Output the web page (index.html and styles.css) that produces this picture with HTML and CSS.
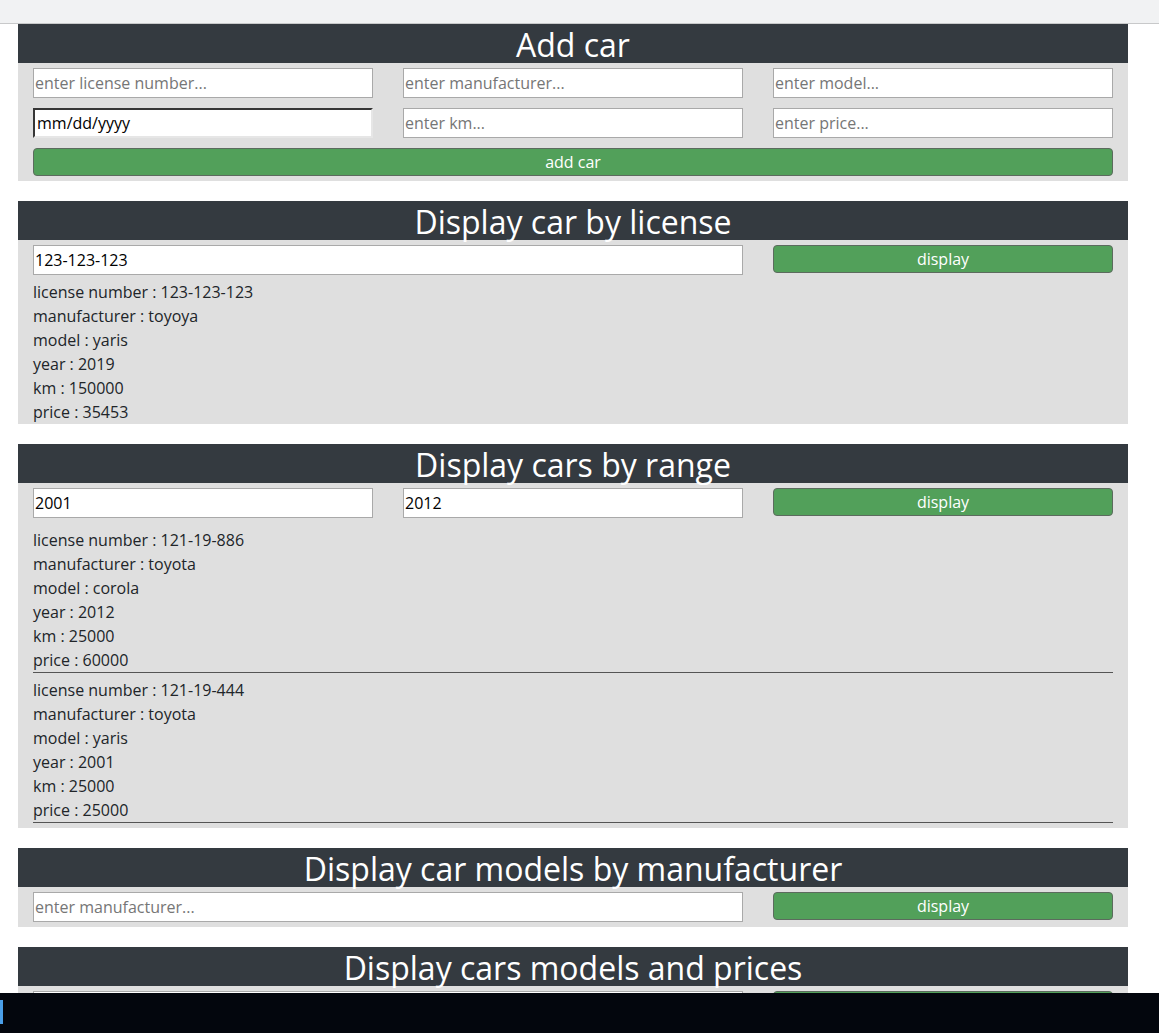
FILE: index.html
```html
<!DOCTYPE html>
<html lang="en">
<head>
    <meta charset="UTF-8">
    <meta name="viewport" content="width=device-width, initial-scale=1.0">
    <title>Car Dealer</title>
    <link rel="stylesheet" href="styles.css">
</head>
<body>
    <div class="topbar"></div>

    <main class="page">
        <!-- Add car -->
        <section class="panel">
            <h2 class="panel-title">Add car</h2>
            <div class="panel-body stack">
                <div class="row">
                    <input type="text" class="field" placeholder="enter license number...">
                    <input type="text" class="field" placeholder="enter manufacturer...">
                    <input type="text" class="field" placeholder="enter model...">
                </div>
                <div class="row">
                    <input type="text" class="field field-date" value="mm/dd/yyyy">
                    <input type="text" class="field" placeholder="enter km...">
                    <input type="text" class="field" placeholder="enter price...">
                </div>
                <button class="btn">add car</button>
            </div>
        </section>

        <!-- Display by license -->
        <section class="panel">
            <h2 class="panel-title">Display car by license</h2>
            <div class="panel-body">
                <div class="row">
                    <input type="text" class="field span2" value="123-123-123">
                    <button class="btn">display</button>
                </div>
                <div class="results single">
                    <div class="record">
                        <div>license number : 123-123-123</div>
                        <div>manufacturer : toyoya</div>
                        <div>model : yaris</div>
                        <div>year : 2019</div>
                        <div>km : 150000</div>
                        <div>price : 35453</div>
                    </div>
                </div>
            </div>
        </section>

        <!-- Display by range -->
        <section class="panel">
            <h2 class="panel-title">Display cars by range</h2>
            <div class="panel-body">
                <div class="row">
                    <input type="text" class="field" value="2001">
                    <input type="text" class="field" value="2012">
                    <button class="btn">display</button>
                </div>
                <div class="results list">
                    <div class="record">
                        <div>license number : 121-19-886</div>
                        <div>manufacturer : toyota</div>
                        <div>model : corola</div>
                        <div>year : 2012</div>
                        <div>km : 25000</div>
                        <div>price : 60000</div>
                    </div>
                    <div class="record">
                        <div>license number : 121-19-444</div>
                        <div>manufacturer : toyota</div>
                        <div>model : yaris</div>
                        <div>year : 2001</div>
                        <div>km : 25000</div>
                        <div>price : 25000</div>
                    </div>
                </div>
            </div>
        </section>

        <!-- Models by manufacturer -->
        <section class="panel">
            <h2 class="panel-title">Display car models by manufacturer</h2>
            <div class="panel-body">
                <div class="row">
                    <input type="text" class="field span2" placeholder="enter manufacturer...">
                    <button class="btn">display</button>
                </div>
            </div>
        </section>

        <!-- Models and prices -->
        <section class="panel">
            <h2 class="panel-title">Display cars models and prices</h2>
            <div class="panel-body">
                <div class="row">
                    <input type="text" class="field span2" placeholder="enter manufacturer...">
                    <button class="btn">display</button>
                </div>
            </div>
        </section>
    </main>

    <div class="taskbar">
        <span class="task-mark"></span>
    </div>
</body>
</html>
```

FILE: styles.css
```css
/* Page */
body {
    margin: 0;
    padding: 0;
    background-color: white;
    font-family: "Comic Sans MS", "Open Sans", sans-serif;
    color: #212529;
}

.topbar {
    height: 23px;
    background-color: #f1f2f3;
    border-bottom: 1px solid #c8c9ca;
}

.page {
    width: 1110px;
    margin: 0 18px;
}

/* Panels */
.panel {
    margin-bottom: 20px;
    background-color: #dfdfdf;
}

.panel-title {
    margin: 0;
    height: 39px;
    line-height: 41px;
    background-color: #343a40;
    color: white;
    font-size: 32px;
    font-weight: normal;
    text-align: center;
}

.panel-body {
    padding: 5px 15px;
}

.stack {
    display: grid;
    row-gap: 10px;
}

.row {
    display: grid;
    grid-template-columns: repeat(3, 340px);
    column-gap: 30px;
}

.span2 {
    grid-column: span 2;
}

/* Form controls */
.field {
    box-sizing: border-box;
    height: 30px;
    padding: 0 1px;
    border: 1px solid #a9a9a9;
    background-color: white;
    font-family: inherit;
    font-size: 16px;
    color: black;
    outline: none;
}

.field::placeholder {
    color: #767676;
}

.field-date {
    border: 2px inset #8a8a8a;
    border-right-color: #e6e6e6;
    border-bottom-color: #e6e6e6;
    padding-left: 2px;
}

.btn {
    box-sizing: border-box;
    width: 100%;
    height: 28px;
    padding: 0;
    background-color: #52a05a;
    border: 1px solid #5c6b5e;
    border-radius: 4px;
    color: white;
    font-family: inherit;
    font-size: 16px;
    cursor: pointer;
}

/* Results */
.results {
    font-size: 16px;
    line-height: 24px;
}

.results.single {
    margin-bottom: -5px;
}

.results.list {
    margin-top: 5px;
}

.record {
    padding-top: 5px;
}

.list .record {
    border-bottom: 1px solid #555;
}

/* Taskbar overlay */
.taskbar {
    position: fixed;
    left: 0;
    bottom: 0;
    width: 100%;
    height: 40px;
    background-color: #03060d;
}

.task-mark {
    position: absolute;
    left: 0;
    top: 7px;
    width: 3px;
    height: 24px;
    background-color: #4a9ee8;
}
```
